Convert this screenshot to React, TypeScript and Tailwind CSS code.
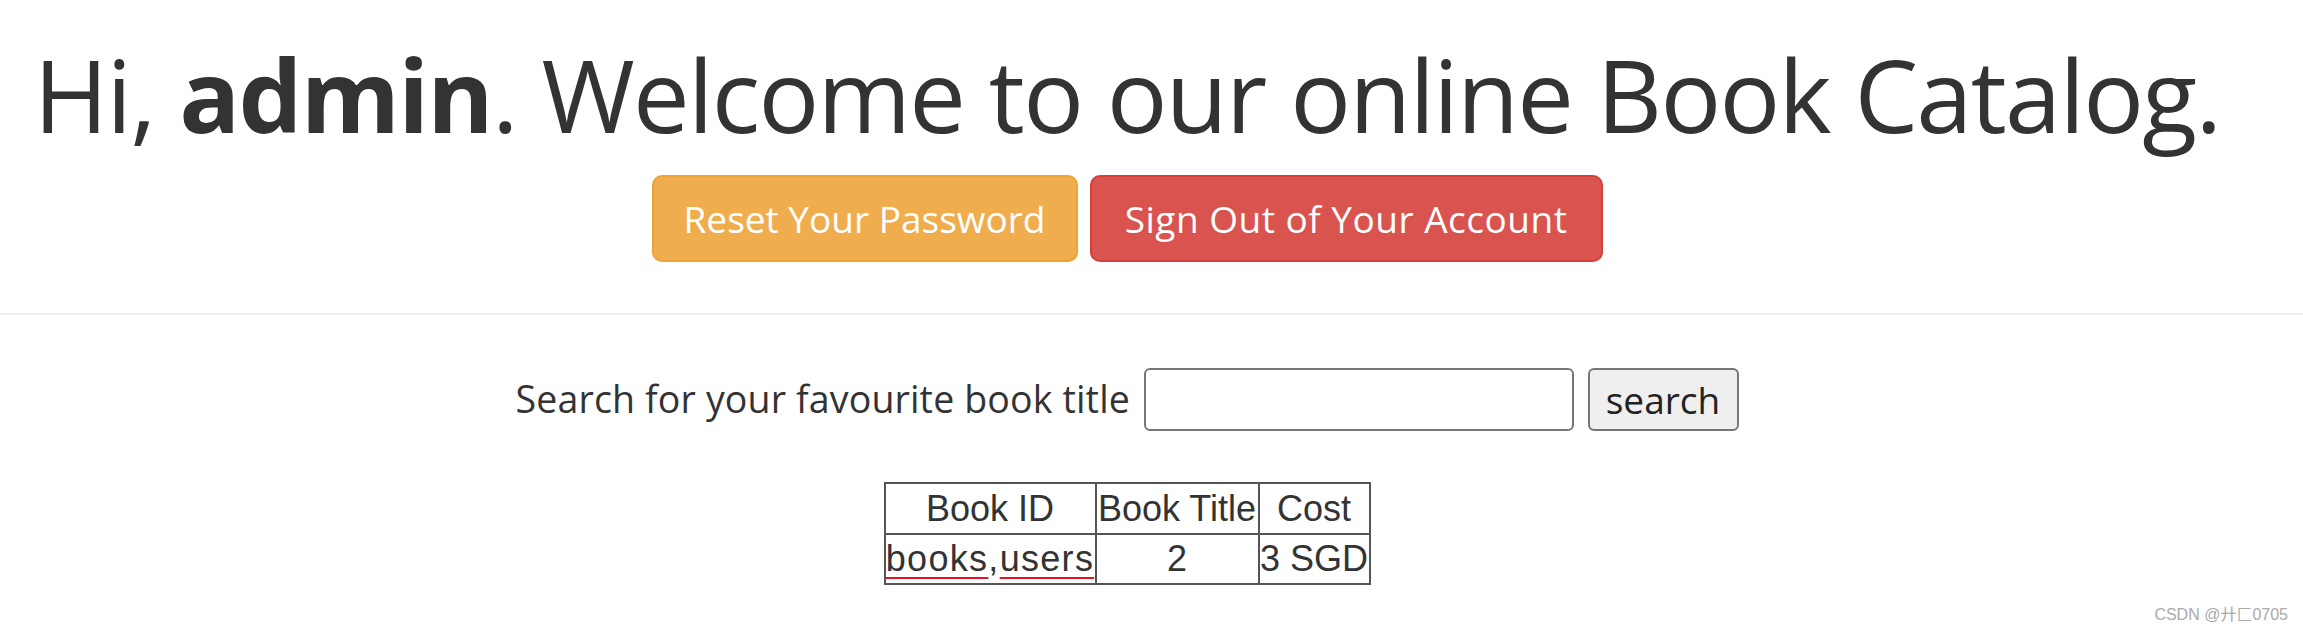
import React from "react";

export default function App() {
  return (
    <div className="relative min-h-[631px] w-[2303px] overflow-hidden bg-white text-[#333]" style={{ fontFamily: '"Open Sans", "Noto Sans", sans-serif' }}>
      <div className="h-[315px] border-b-2 border-[#eee]">
        <div className="flex flex-col items-center pr-[49px]">
          <h1 className="mt-[44px] whitespace-nowrap text-[101px] font-normal leading-[101px] tracking-[-1.7px]">
            Hi, <b className="font-bold">admin</b>. Welcome to our online Book Catalog.
          </h1>
          <div className="mt-[30px] flex gap-[12px]">
            <button className="flex h-[87px] w-[426px] items-center justify-center rounded-[10px] border-2 border-[#eea236] bg-[#f0ad4e] text-[37px] text-white">
              Reset Your Password
            </button>
            <button className="flex h-[87px] w-[513px] items-center justify-center rounded-[10px] border-2 border-[#d43f3a] bg-[#d9534f] text-[37px] tracking-[0.5px] text-white">
              Sign Out of Your Account
            </button>
          </div>
        </div>
      </div>
      <div className="flex flex-col items-center pr-[49px]">
        <div className="mt-[53px] flex items-center gap-[14px]">
          <span className="w-[614px] whitespace-nowrap text-[37.5px] tracking-[0.15px]">Search for your favourite book title</span>
          <input className="h-[63px] w-[430px] rounded-[6px] border-2 border-[#767676] bg-white" />
          <button className="h-[63px] w-[151px] rounded-[6px] border-2 border-[#767676] bg-[#efefef] text-[37px] text-[#222]">
            search
          </button>
        </div>
        <table className="mt-[51px] border-collapse text-[36px] leading-[46px] text-[#333]" style={{ fontFamily: '"Liberation Sans", Arial, sans-serif' }}>
          <thead>
            <tr>
              <th className="h-[51px] w-[211px] border-2 border-[#555] p-0 text-center font-normal">Book ID</th>
              <th className="h-[51px] w-[163px] border-2 border-[#555] p-0 text-center font-normal">Book Title</th>
              <th className="h-[51px] w-[111px] border-2 border-[#555] p-0 text-center font-normal">Cost</th>
            </tr>
          </thead>
          <tbody>
            <tr>
              <td className="h-[50px] whitespace-nowrap border-2 border-[#555] p-0 text-center tracking-[1.3px]">
                <span className="underline decoration-[#e81123] decoration-[2px] underline-offset-[6px]">books</span>,<span className="underline decoration-[#e81123] decoration-[2px] underline-offset-[6px]">users</span>
              </td>
              <td className="h-[50px] border-2 border-[#555] p-0 text-center">2</td>
              <td className="h-[50px] whitespace-nowrap border-2 border-[#555] p-0 text-center">3 SGD</td>
            </tr>
          </tbody>
        </table>
      </div>
      <div className="absolute bottom-[4px] right-[15px] text-[16px] text-[#aaa]" style={{ fontFamily: '"Liberation Sans", "Noto Sans CJK SC", sans-serif' }}>
        CSDN @廾匚0705
      </div>
    </div>
  );
}
